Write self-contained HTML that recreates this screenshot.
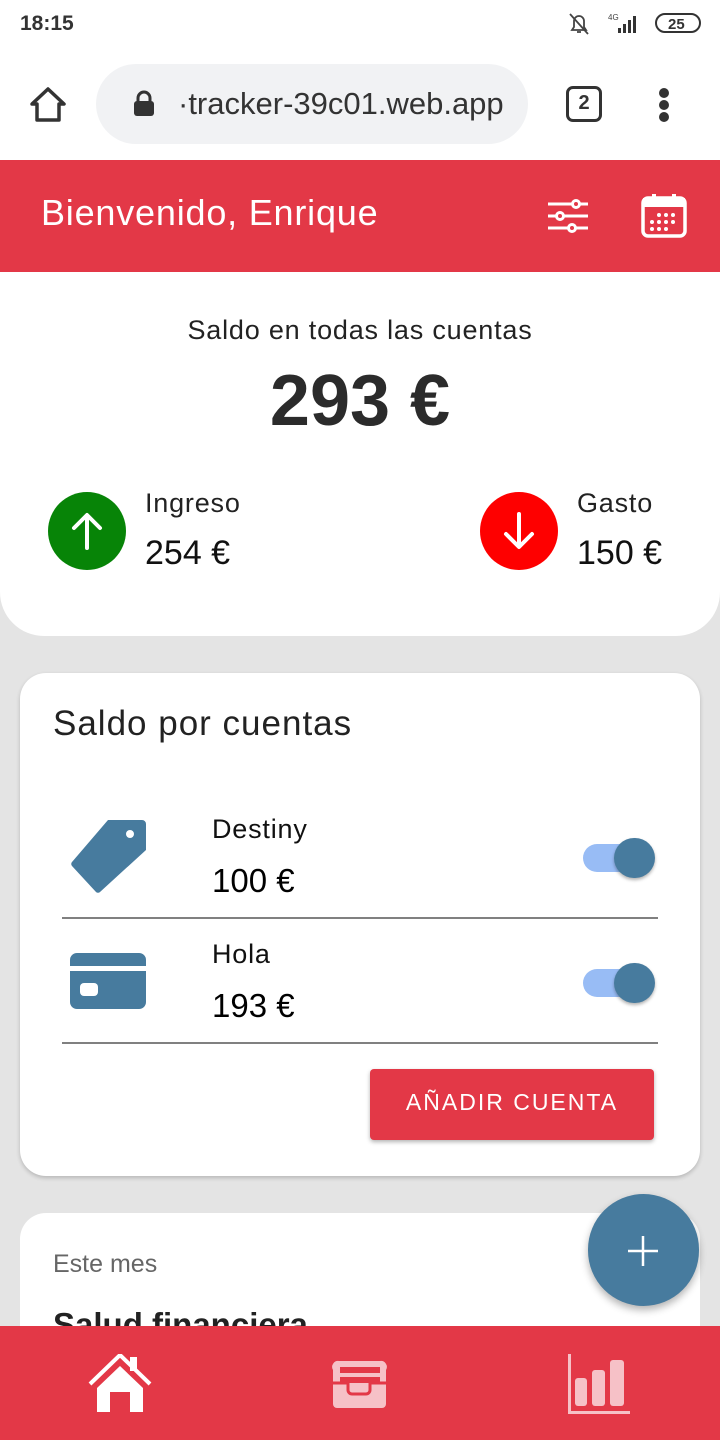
<!DOCTYPE html>
<html><head><meta charset="utf-8"><style>
*{margin:0;padding:0;box-sizing:border-box}
body{width:720px;height:1440px;overflow:hidden;background:#e4e4e4;font-family:"Liberation Sans",sans-serif;position:relative}
.abs{position:absolute;white-space:nowrap}
</style></head><body>
<div class="abs" style="left:0;top:0;width:720px;height:160px;background:#fff"></div>
<div class="abs" style="left:20px;top:12px;font-size:21px;font-weight:bold;color:#333">18:15</div>
<svg class="abs" style="left:566px;top:10px" width="140" height="30" viewBox="0 0 140 30">
<path d="M6 20 L8 17 V11 a5 5 0 0 1 10 0 V17 L20 20 Z M11 22 h4" fill="none" stroke="#444" stroke-width="1.8"/><line x1="4" y1="4" x2="22" y2="24" stroke="#444" stroke-width="1.8"/>
<text x="42" y="10" font-size="8" fill="#444" font-family="Liberation Sans">4G</text>
<rect x="52" y="18" width="3" height="5" fill="#333"/><rect x="57" y="14" width="3" height="9" fill="#333"/><rect x="62" y="10" width="3" height="13" fill="#333"/><rect x="67" y="6" width="3" height="17" fill="#333"/>
<rect x="90" y="4" width="44" height="18" rx="9" fill="none" stroke="#333" stroke-width="2"/>
<text x="102" y="19" font-size="15" font-weight="bold" fill="#333" font-family="Liberation Sans">25</text></svg>
<svg class="abs" style="left:28px;top:84px" width="40" height="40" viewBox="0 0 40 40"><path d="M4 20 L20 5 L36 20 H31 V36 H9 V20 Z" fill="none" stroke="#333" stroke-width="3.5" stroke-linejoin="round"/></svg>
<div class="abs" style="left:96px;top:64px;width:432px;height:80px;border-radius:40px;background:#f1f2f4"></div>
<svg class="abs" style="left:132px;top:90px" width="24" height="28" viewBox="0 0 24 28"><rect x="2" y="11" width="20" height="15" rx="3" fill="#333"/><path d="M6 12 V8 a6 6 0 0 1 12 0 V12" fill="none" stroke="#333" stroke-width="3"/></svg>
<div class="abs" style="left:178px;top:86px;font-size:31px;color:#333">·tracker-39c01.web.app</div>
<div class="abs" style="left:566px;top:86px;width:36px;height:36px;border:3.5px solid #333;border-radius:7px;font-size:20px;font-weight:bold;text-align:center;line-height:29px;color:#333">2</div>
<div class="abs" style="left:659px;top:88px;width:10px;height:10px;border-radius:5px;background:#333"></div>
<div class="abs" style="left:659px;top:100px;width:10px;height:10px;border-radius:5px;background:#333"></div>
<div class="abs" style="left:659px;top:112px;width:10px;height:10px;border-radius:5px;background:#333"></div>

<div class="abs" style="left:0;top:160px;width:720px;height:112px;background:#e33847"></div>
<div class="abs" style="left:41px;top:192px;font-size:36px;letter-spacing:0.8px;color:#fff">Bienvenido, Enrique</div>
<svg class="abs" style="left:546px;top:196px" width="44" height="40" viewBox="0 0 44 40" stroke="#fff" stroke-width="3" fill="#e33847"><line x1="2" y1="8" x2="42" y2="8"/><line x1="2" y1="20" x2="42" y2="20"/><line x1="2" y1="32" x2="42" y2="32"/><circle cx="30" cy="8" r="3.5"/><circle cx="14" cy="20" r="3.5"/><circle cx="26" cy="32" r="3.5"/></svg>
<svg class="abs" style="left:640px;top:192px" width="48" height="48" viewBox="0 0 48 48"><rect x="3" y="6" width="42" height="38" rx="5" fill="none" stroke="#fff" stroke-width="3.5"/><rect x="3" y="6" width="42" height="9" fill="#fff"/><rect x="12" y="2" width="4" height="8" fill="#fff"/><rect x="32" y="2" width="4" height="8" fill="#fff"/><g fill="#fff"><circle cx="19" cy="23" r="2"/><circle cx="26" cy="23" r="2"/><circle cx="33" cy="23" r="2"/><circle cx="12" cy="30" r="2"/><circle cx="19" cy="30" r="2"/><circle cx="26" cy="30" r="2"/><circle cx="33" cy="30" r="2"/><circle cx="12" cy="37" r="2"/><circle cx="19" cy="37" r="2"/><circle cx="26" cy="37" r="2"/></g></svg>

<div class="abs" style="left:0;top:272px;width:720px;height:364px;background:#fff;border-radius:0 0 44px 44px"></div>
<div class="abs" style="left:0;top:315px;width:720px;text-align:center;font-size:27px;letter-spacing:0.8px;color:#222">Saldo en todas las cuentas</div>
<div class="abs" style="left:0;top:360px;width:720px;text-align:center;font-size:72px;font-weight:bold;color:#2b2b2b">293 €</div>
<div class="abs" style="left:48px;top:492px;width:78px;height:78px;border-radius:39px;background:#078407"></div>
<svg class="abs" style="left:48px;top:492px" width="78" height="78" viewBox="0 0 78 78" stroke="#fff" stroke-width="4" fill="none" stroke-linecap="round" stroke-linejoin="round"><path d="M39 56 V24 M26 36 L39 23 L52 36"/></svg>
<div class="abs" style="left:145px;top:488px;font-size:27px;letter-spacing:0.8px;color:#222">Ingreso</div>
<div class="abs" style="left:145px;top:534px;font-size:34px;color:#111">254 €</div>
<div class="abs" style="left:480px;top:492px;width:78px;height:78px;border-radius:39px;background:#fe0000"></div>
<svg class="abs" style="left:480px;top:492px" width="78" height="78" viewBox="0 0 78 78" stroke="#fff" stroke-width="4" fill="none" stroke-linecap="round" stroke-linejoin="round"><path d="M39 22 V54 M26 42 L39 55 L52 42"/></svg>
<div class="abs" style="left:577px;top:488px;font-size:27px;letter-spacing:0.8px;color:#222">Gasto</div>
<div class="abs" style="left:577px;top:534px;font-size:34px;color:#111">150 €</div>

<div class="abs" style="left:20px;top:673px;width:680px;height:503px;background:#fff;border-radius:26px;box-shadow:0 2px 4px rgba(0,0,0,.2)"></div>
<div class="abs" style="left:53px;top:704px;font-size:35px;letter-spacing:1px;color:#222">Saldo por cuentas</div>
<svg class="abs" style="left:64px;top:816px" width="90" height="80" viewBox="0 0 90 80"><path d="M44 4 H78 a4 4 0 0 1 4 4 V34 L36 76 a3 3 0 0 1 -4 0 L8 50 a3 3 0 0 1 0 -4 Z" fill="#477b9e"/><circle cx="66" cy="18" r="4" fill="#fff"/></svg>
<div class="abs" style="left:212px;top:814px;font-size:27px;letter-spacing:0.8px;color:#111">Destiny</div>
<div class="abs" style="left:212px;top:862px;font-size:33px;color:#000">100 €</div>
<div class="abs" style="left:583px;top:844px;width:60px;height:28px;border-radius:14px;background:#98bcf5"></div>
<div class="abs" style="left:614px;top:838px;width:41px;height:40px;border-radius:20px;background:#477b9e;box-shadow:0 2px 3px rgba(0,0,0,.3)"></div>
<div class="abs" style="left:62px;top:917px;width:596px;height:2px;background:#808080"></div>
<svg class="abs" style="left:70px;top:951px" width="76" height="60" viewBox="0 0 76 60"><path d="M0 9 a7 7 0 0 1 7 -7 H69 a7 7 0 0 1 7 7 V15 H0 Z M0 20 H76 V51 a7 7 0 0 1 -7 7 H7 a7 7 0 0 1 -7 -7 Z" fill="#477b9e"/><rect x="10" y="32" width="18" height="13" rx="4" fill="#fff"/></svg>
<div class="abs" style="left:212px;top:939px;font-size:27px;letter-spacing:0.8px;color:#111">Hola</div>
<div class="abs" style="left:212px;top:987px;font-size:33px;color:#000">193 €</div>
<div class="abs" style="left:583px;top:969px;width:60px;height:28px;border-radius:14px;background:#98bcf5"></div>
<div class="abs" style="left:614px;top:963px;width:41px;height:40px;border-radius:20px;background:#477b9e;box-shadow:0 2px 3px rgba(0,0,0,.3)"></div>
<div class="abs" style="left:62px;top:1042px;width:596px;height:2px;background:#808080"></div>
<div class="abs" style="left:370px;top:1069px;width:284px;height:71px;background:#e33847;border-radius:4px;box-shadow:0 2px 4px rgba(0,0,0,.3);color:#fff;font-size:23px;letter-spacing:2px;text-align:center;line-height:66px">AÑADIR CUENTA</div>

<div class="abs" style="left:20px;top:1213px;width:680px;height:200px;background:#fff;border-radius:26px"></div>
<div class="abs" style="left:53px;top:1250px;font-size:25px;color:#666">Este mes</div>
<div class="abs" style="left:53px;top:1306px;font-size:33px;font-weight:bold;color:#222">Salud financiera</div>
<div class="abs" style="left:588px;top:1194px;width:111px;height:112px;border-radius:56px;background:#477b9e;box-shadow:0 4px 8px rgba(0,0,0,.3)"></div>
<svg class="abs" style="left:626px;top:1234px" width="34" height="34" viewBox="0 0 34 34" stroke="#fff" stroke-width="2.5"><line x1="17" y1="2" x2="17" y2="32"/><line x1="2" y1="17" x2="32" y2="17"/></svg>

<div class="abs" style="left:0;top:1326px;width:720px;height:114px;background:#e33847"></div>
<svg class="abs" style="left:88px;top:1354px" width="64" height="60" viewBox="0 0 64 60"><path d="M2 30 L32 1 L62 30" fill="none" stroke="#fff" stroke-width="4"/><rect x="42" y="3" width="7" height="14" fill="#fff"/><path d="M9 34 L32 12 L55 34 V58 H42 V38 H22 V58 H9 Z" fill="#fff"/></svg>
<svg class="abs" style="left:330px;top:1358px" width="60" height="52" viewBox="0 0 60 52"><path d="M3 12 a6 6 0 0 1 6 -9 H50 a6 6 0 0 1 6 9 V46 a4 4 0 0 1 -4 4 H7 a4 4 0 0 1 -4 -4 Z" fill="#f6c1c7"/><rect x="10" y="9" width="40" height="6" fill="#e33847"/><rect x="10" y="19" width="40" height="6" fill="#e33847"/><path d="M3 25 H18 V32 a4 4 0 0 0 4 4 H36 a4 4 0 0 0 4 -4 V25 H56" fill="none" stroke="#e33847" stroke-width="3"/></svg>
<svg class="abs" style="left:566px;top:1352px" width="66" height="64" viewBox="0 0 66 64" fill="#f6c1c7"><rect x="2" y="2" width="3" height="60"/><rect x="2" y="59" width="62" height="3"/><rect x="9" y="26" width="12" height="28" rx="3"/><rect x="26" y="18" width="13" height="36" rx="3"/><rect x="44" y="8" width="14" height="46" rx="3"/></svg>
</body></html>
